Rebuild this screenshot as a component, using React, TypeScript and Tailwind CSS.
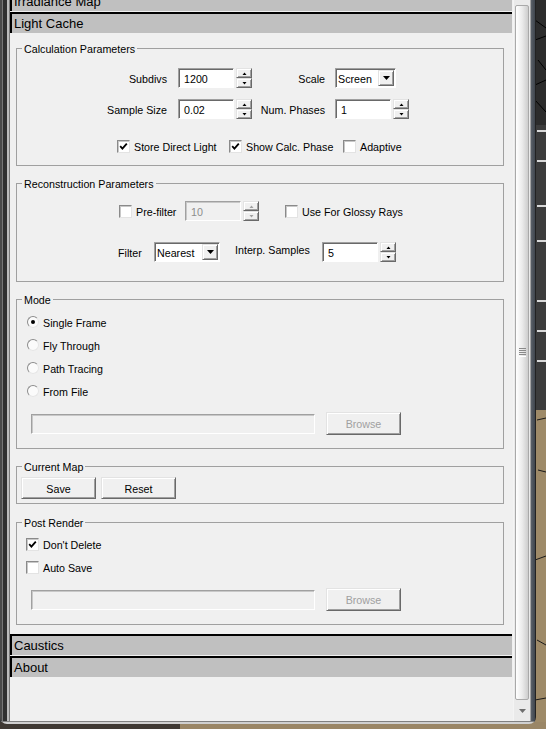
import React from "react";

const sunken =
  "border border-t-[#a0a0a0] border-l-[#a0a0a0] border-r-white border-b-white shadow-[inset_1px_1px_0_#696969]";
const raised =
  "bg-[#f0f0f0] border border-t-[#e3e3e3] border-l-[#e3e3e3] border-r-[#696969] border-b-[#696969] shadow-[inset_1px_1px_0_#ffffff,inset_-1px_-1px_0_#a0a0a0]";

function Header({ title, className = "" }: { title: string; className?: string }) {
  return (
    <div
      className={`w-[502px] h-[21px] shrink-0 border-t-2 border-l-2 border-black bg-[#c0c0c0] pl-[2px] flex items-center text-[13px] leading-[19px] ${className}`}
    >
      {title}
    </div>
  );
}

function Group({ title, className = "", children }: { title: string; className?: string; children: React.ReactNode }) {
  return (
    <fieldset className={`w-[488px] ml-[6px] border border-[#a0a0a0] ${className}`}>
      <legend className="ml-[5px] px-[2px] leading-[14px] pt-px">{title}</legend>
      {children}
    </fieldset>
  );
}

function Arrow({ up, color }: { up?: boolean; color: string }) {
  return (
    <svg width="5" height="3" viewBox="0 0 5 3">
      <polygon points={up ? "0.5,3 2.5,0.5 4.5,3" : "0.5,0 2.5,2.5 4.5,0"} fill={color} />
    </svg>
  );
}

function Spin({ disabled }: { disabled?: boolean }) {
  const c = disabled ? "#a0a0a0" : "#000000";
  return (
    <div className="ml-[2px] w-[16px] h-[20px] flex flex-col">
      <div className={`h-[10px] flex items-center justify-center ${raised}`}>
        <Arrow up color={c} />
      </div>
      <div className={`h-[10px] flex items-center justify-center ${raised}`}>
        <Arrow color={c} />
      </div>
    </div>
  );
}

function Field({ value, w = "w-[56px]", disabled }: { value: string; w?: string; disabled?: boolean }) {
  return (
    <div
      className={`${w} h-[20px] shrink-0 flex items-center pl-[5px] pt-px ${
        disabled
          ? "bg-[#f0f0f0] text-[#8d8d8d] border border-t-[#a0a0a0] border-l-[#a0a0a0] border-r-white border-b-white shadow-[inset_1px_1px_0_#c8c8c8]"
          : `bg-white ${sunken}`
      }`}
    >
      {value}
    </div>
  );
}

function Combo({ value, w }: { value: string; w: string }) {
  return (
    <div className={`${w} h-[20px] shrink-0 flex items-center bg-white ${sunken}`}>
      <span className="flex-1 pl-[2px] pt-px">{value}</span>
      <div className={`w-[16px] h-[16px] mr-px flex items-center justify-center ${raised}`}>
        <svg width="7" height="4" viewBox="0 0 7 4">
          <polygon points="0,0 7,0 3.5,4" fill="#000" />
        </svg>
      </div>
    </div>
  );
}

function Check({ checked }: { checked?: boolean }) {
  return (
    <span className="w-[13px] h-[13px] shrink-0 bg-white border border-t-[#8a8a8a] border-l-[#8a8a8a] border-r-[#e3e3e3] border-b-[#e3e3e3] shadow-[inset_1px_1px_0_#c8c8c8] flex items-center justify-center">
      {checked && (
        <svg width="9" height="9" viewBox="0 0 9 9">
          <path d="M1.2 4.2 L3.4 6.6 L7.8 1.6" stroke="#000" strokeWidth="1.8" fill="none" />
        </svg>
      )}
    </span>
  );
}

function CheckLabel({ checked, label, className = "" }: { checked?: boolean; label: string; className?: string }) {
  return (
    <div className={`flex items-center h-[14px] ${className}`}>
      <Check checked={checked} />
      <span className="ml-[4px] whitespace-nowrap pt-px">{label}</span>
    </div>
  );
}

function Radio({ on, label }: { on?: boolean; label: string }) {
  return (
    <div className="flex items-center h-[14px] ml-[10px]">
      <span className="w-[12px] h-[12px] shrink-0 rounded-full bg-[#fbfbfb] border border-t-[#8c8c8c] border-l-[#8c8c8c] border-r-[#e6e6e6] border-b-[#e6e6e6] flex items-center justify-center">
        {on && <span className="w-[4px] h-[4px] rounded-full bg-black" />}
      </span>
      <span className="ml-[4px] pt-px">{label}</span>
    </div>
  );
}

function Button({ label, disabled }: { label: string; disabled?: boolean }) {
  return (
    <div
      className={`w-[75px] shrink-0 flex items-center justify-center pt-px ${disabled ? "h-[23px] text-[#a0a0a0]" : "h-[22px]"} ${raised}`}
    >
      {label}
    </div>
  );
}

function FileRow() {
  return (
    <div className="flex items-center h-[23px] mt-[14px] mb-[13px] ml-[14px]">
      <div className="w-[284px] h-[20px] bg-[#f0f0f0] border border-t-[#a0a0a0] border-l-[#a0a0a0] border-r-white border-b-white shadow-[inset_1px_1px_0_#c8c8c8]" />
      <div className="ml-[11px]">
        <Button label="Browse" disabled />
      </div>
    </div>
  );
}

function Backdrop() {
  return (
    <svg className="absolute inset-0" width="546" height="729" viewBox="0 0 546 729">
      <rect width="546" height="729" fill="#3a3a3a" />
      <rect x="535" y="0" width="11" height="125" fill="#2c2c2c" />
      <path d="M535 20 L546 28 M535 40 L546 36 M538 60 L546 70 M535 85 L546 80 M535 100 L546 112" stroke="#000" strokeWidth="1" />
      <rect x="535" y="125" width="11" height="285" fill="#3c3c3c" />
      {[130, 160, 205, 240, 300, 330, 360].map((y) => (
        <rect key={y} x="537" y={y} width="9" height="2" fill="#d8d8d8" />
      ))}
      <rect x="535" y="410" width="11" height="319" fill="#9e8a68" />
      <path d="M537 420 L546 418 M538 470 L546 472 M535 560 L546 556 M537 640 L546 645 M535 700 L546 698" stroke="#1a1a1a" strokeWidth="1" />
      <rect x="0" y="722" width="180" height="7" fill="#3f3933" />
      <rect x="180" y="722" width="366" height="7" fill="#9a8666" />
    </svg>
  );
}

export default function App() {
  return (
    <div className="relative w-[546px] h-[729px] overflow-hidden font-['Liberation_Sans',Arial,sans-serif] text-[10.7px] leading-[14px] text-black">
      <Backdrop />
      <div className="relative w-[536px] h-[724px] flex flex-col rounded-b-[7px] overflow-hidden">
        <div className="flex h-[721px]">
          {/* left window frame */}
          <div className="w-[10px] flex">
            <div className="w-[2px] bg-[#4a4a4a]" />
            <div className="w-px bg-[#777777]" />
            <div className="w-[4px] bg-[#303030]" />
            <div className="w-[2px] bg-[#bcbcbc]" />
            <div className="w-px bg-[#7a7a7a]" />
          </div>

          {/* rollout panel */}
          <div className="w-[503px] bg-[#f0f0f0] flex flex-col overflow-hidden">
            <Header title="Irradiance Map" className="-mt-[10px]" />
            <Header title="Light Cache" className="mt-px" />

            <Group title="Calculation Parameters" className="mt-[8px]">
              <div className="flex items-center h-[20px] mt-[12px]">
                <div className="w-[150px] text-right pt-px">Subdivs</div>
                <div className="ml-[11px]">
                  <Field value="1200" />
                </div>
                <Spin />
                <div className="w-[73px] text-right pt-px">Scale</div>
                <div className="ml-[10px]">
                  <Combo value="Screen" w="w-[61px]" />
                </div>
              </div>
              <div className="flex items-center h-[20px] mt-[11px]">
                <div className="w-[150px] text-right pt-px">Sample Size</div>
                <div className="ml-[11px]">
                  <Field value="0.02" />
                </div>
                <Spin />
                <div className="w-[73px] text-right pt-px">Num. Phases</div>
                <div className="ml-[10px]">
                  <Field value="1" />
                </div>
                <Spin />
              </div>
              <div className="flex items-center h-[14px] mt-[20px] mb-[12px] ml-[100px]">
                <CheckLabel checked label="Store Direct Light" className="w-[112px]" />
                <CheckLabel checked label="Show Calc. Phase" className="w-[114px]" />
                <CheckLabel label="Adaptive" />
              </div>
            </Group>

            <Group title="Reconstruction Parameters" className="mt-[10px]">
              <div className="flex items-center h-[20px] mt-[10px] ml-[102px]">
                <CheckLabel label="Pre-filter" className="w-[66px]" />
                <Field value="10" disabled />
                <Spin disabled />
                <CheckLabel label="Use For Glossy Rays" className="ml-[26px]" />
              </div>
              <div className="flex items-center h-[20px] mt-[21px] mb-[19px] ml-[101px]">
                <div className="w-[36px] pt-px">Filter</div>
                <Combo value="Nearest" w="w-[66px]" />
                <div className="ml-[15px] w-[87px] self-start pt-px">Interp. Samples</div>
                <Field value="5" />
                <Spin />
              </div>
            </Group>

            <Group title="Mode" className="mt-[10px]">
              <div className="mt-[8px] flex flex-col gap-[9px]">
                <Radio on label="Single Frame" />
                <Radio label="Fly Through" />
                <Radio label="Path Tracing" />
                <Radio label="From File" />
              </div>
              <FileRow />
            </Group>

            <Group title="Current Map" className="mt-[10px]">
              <div className="flex items-center gap-[5px] mt-[3px] mb-[4px] ml-[4px]">
                <Button label="Save" />
                <Button label="Reset" />
              </div>
            </Group>

            <Group title="Post Render" className="mt-[11px]">
              <div className="mt-[7px] ml-[9px] flex flex-col gap-[9px]">
                <CheckLabel checked label="Don't Delete" />
                <CheckLabel label="Auto Save" />
              </div>
              <FileRow />
            </Group>

            <Header title="Caustics" className="mt-[9px]" />
            <Header title="About" className="mt-px" />
          </div>

          {/* scrollbar */}
          <div className="w-[17px] bg-[#eaeaea] border-l border-[#f4f4f4] flex flex-col items-center">
            <div className="mt-[5px] w-[14px] h-[695px] rounded-[2px] border border-[#a9a9a9] bg-gradient-to-r from-white via-[#ececec] to-[#cdcdcd] flex items-center justify-center">
              <svg width="7" height="9" viewBox="0 0 7 9">
                {[0.5, 2.5, 4.5, 6.5, 8.5].map((y) => (
                  <line key={y} x1="0" y1={y} x2="7" y2={y} stroke={y === 8.5 ? "#ffffff" : "#8a8a8a"} strokeWidth="1" />
                ))}
              </svg>
            </div>
            <div className="flex-1 flex items-center justify-center">
              <svg width="7" height="4" viewBox="0 0 7 4">
                <polygon points="0,0 7,0 3.5,4" fill="#6e6e6e" />
              </svg>
            </div>
          </div>

          {/* right window frame */}
          <div className="w-[6px] flex">
            <div className="w-px bg-[#a4a4a4]" />
            <div className="w-[4px] bg-gradient-to-r from-[#5a6068] to-[#40464e]" />
            <div className="w-px bg-[#222222]" />
          </div>
        </div>
        <div className="h-[3px] border-t border-[#808080] bg-[#d0d0d0]" />
      </div>
    </div>
  );
}
